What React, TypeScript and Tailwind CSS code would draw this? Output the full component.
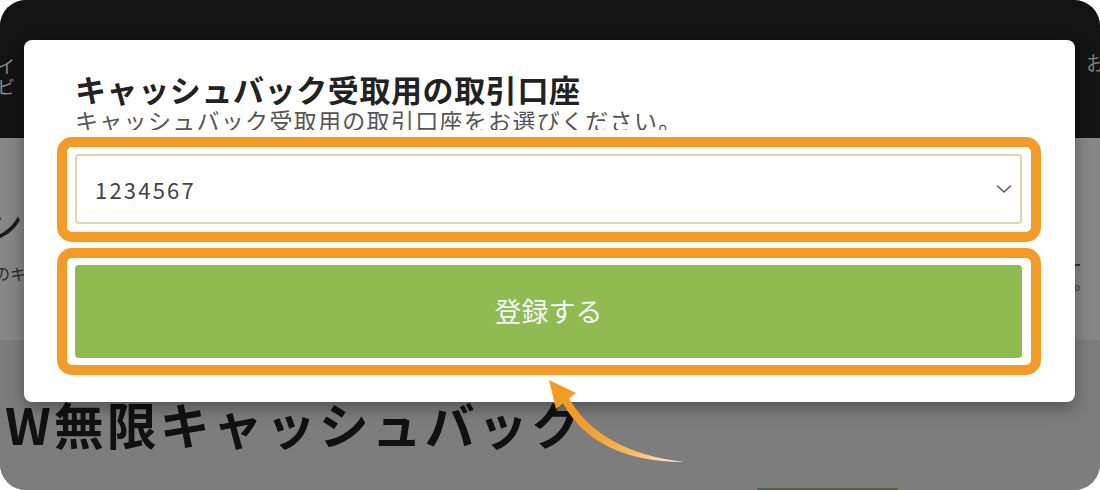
import React from 'react';

const font = { fontFamily: '"Noto Sans CJK JP", "Noto Sans", sans-serif' };

const Chevron: React.FC = () => (
  <svg width="16" height="10" viewBox="0 0 16 10" fill="none" className="shrink-0">
    <path d="M1.5 2 L8 8 L14.5 2" stroke="#5a5a5a" strokeWidth="1.6" strokeLinecap="round" strokeLinejoin="round" />
  </svg>
);

const Arrow: React.FC = () => (
  <svg className="absolute inset-0 pointer-events-none" width="1100" height="490" viewBox="0 0 1100 490">
    <defs>
      <linearGradient id="arrowFade" gradientUnits="userSpaceOnUse" x1="684" y1="463" x2="585" y2="420">
        <stop offset="0" stopColor="#fff3e0" />
        <stop offset="0.45" stopColor="#f7bd6c" />
        <stop offset="1" stopColor="#f39b25" />
      </linearGradient>
    </defs>
    <path
      d="M569 398.5 Q600 452 684 462 Q596 462 563 403.5 L556 409 L549 380 L576 393 Z"
      fill="url(#arrowFade)"
    />
  </svg>
);

export default function App() {
  return (
    <div className="w-[1100px] h-[490px] bg-white" style={font}>
      <div className="relative w-full h-full rounded-[26px] overflow-hidden bg-[#7d7d7d] flex flex-col">
        {/* page behind the dialog */}
        <div className="h-[138px] bg-[#131313] flex justify-between shrink-0">
          <div className="pt-[55px] -ml-[3px] text-[18px] leading-[21px] text-[#8a8a8a]">
            <div>イ</div>
            <div>ビ</div>
          </div>
          <div className="pt-[50px] -mr-[6px] text-[20px] leading-[26px] text-[#7a7a7a]">お</div>
        </div>

        <div className="h-[202px] bg-[#868686] flex justify-between shrink-0">
          <div className="flex flex-col">
            <div className="pt-[62px] -ml-[19px] text-[42px] leading-[46px] text-[#1a1a1a]">ン</div>
            <div className="pt-[18px] -ml-[6px] text-[16px] leading-[18px] text-[#2a2a2a]">のキ</div>
          </div>
          <div className="flex flex-col items-end pt-[126px] pr-[10px] text-[16px] leading-[16px] text-[#2a2a2a]">
            <div className="w-[6px] h-[1.5px] bg-[#333] mr-[10px]" />
            <div className="pt-[8px]">。</div>
          </div>
        </div>

        <div className="flex-1 bg-[#7d7d7d] flex flex-col">
          <div className="pt-[58px] pl-[5px] text-[50px] leading-[50px] font-bold tracking-[3px] text-[#111]">
            W無限キャッシュバック
          </div>
          <div className="flex-1" />
          <div className="flex justify-end pr-[202px]">
            <div className="w-[141px] h-[2px] bg-[#51663a]" />
          </div>
        </div>

        {/* dialog */}
        <div className="absolute top-[40px] left-[24px] w-[1051px] h-[362px] bg-white rounded-[8px] shadow-[0_6px_16px_rgba(0,0,0,0.35)] pt-[33px] pl-[33px] pr-[34px]">
          <div className="pl-[18px]">
            <h2 className="text-[31px] leading-[31px] font-bold tracking-[0.6px] text-[#222]">
              キャッシュバック受取用の取引口座
            </h2>
            <div className="mt-[5px] h-[21px] overflow-hidden">
              <p className="text-[23px] leading-[23px] tracking-[1.3px] text-[#555]">
                キャッシュバック受取用の取引口座をお選びください。
              </p>
            </div>
          </div>

          <div className="mt-[7px] h-[105px] border-[10px] border-[#f39b25] rounded-[15px] pt-[7px] pb-[8px] pl-[8px] pr-[9px]">
            <div className="h-[70px] border-2 border-[#c9e2ad] rounded-[4px] flex items-center justify-between pl-[18px] pr-[8px]">
              <span className="text-[22px] tracking-[2.2px] text-[#444]">1234567</span>
              <Chevron />
            </div>
          </div>

          <div className="mt-[6px] h-[127px] border-[10px] border-[#f39b25] rounded-[15px] pt-[7px] pb-[7px] pl-[8px] pr-[9px]">
            <button className="w-full h-[93px] bg-[#8fbb50] rounded-[4px] flex items-center justify-center text-[27px] text-[#f4f4f4]">
              登録する
            </button>
          </div>
        </div>

        <Arrow />
      </div>
    </div>
  );
}
